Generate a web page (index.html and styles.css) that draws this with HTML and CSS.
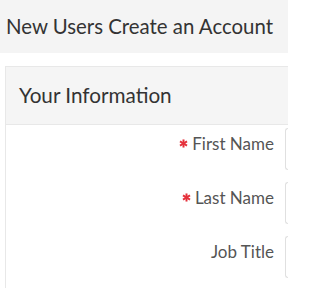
FILE: index.html
```html
<!DOCTYPE html>
<html>
<head>
<meta charset="utf-8">
<link rel="stylesheet" href="styles.css">
</head>
<body>
<div class="page-head">New Users Create an Account</div>
<div class="wrap">
  <div class="card">
    <div class="card-head">Your Information</div>
    <div class="card-body">
      <div class="row">
        <label class="lbl"><svg class="req" viewBox="0 0 10 10" width="9" height="9"><g stroke="#e5323c" stroke-width="2.2" stroke-linecap="butt"><line x1="5" y1="0.5" x2="5" y2="9.5"/><line x1="1.1" y1="2.75" x2="8.9" y2="7.25"/><line x1="1.1" y1="7.25" x2="8.9" y2="2.75"/></g></svg>First Name</label>
        <div class="input"></div>
      </div>
      <div class="row">
        <label class="lbl"><svg class="req" viewBox="0 0 10 10" width="9" height="9"><g stroke="#e5323c" stroke-width="2.2" stroke-linecap="butt"><line x1="5" y1="0.5" x2="5" y2="9.5"/><line x1="1.1" y1="2.75" x2="8.9" y2="7.25"/><line x1="1.1" y1="7.25" x2="8.9" y2="2.75"/></g></svg>Last Name</label>
        <div class="input"></div>
      </div>
      <div class="row">
        <label class="lbl">Job Title</label>
        <div class="input"></div>
      </div>
    </div>
  </div>
</div>
</body>
</html>
```
FILE: styles.css
```css
html, body {
  margin: 0;
  padding: 0;
  background: #ffffff;
  font-family: Lato, "Open Sans", sans-serif;
  overflow: hidden;
  width: 288px;
  height: 288px;
}
.page-head {
  height: 53px;
  background: #f4f4f4;
  color: #333333;
  font-size: 20.4px;
  line-height: 53px;
  padding-left: 6px;
  white-space: nowrap;
  overflow: hidden;
}
.wrap {
  padding: 13px 0 0 5px;
}
.card {
  border: 1px solid #e8e8e8;
  border-right: none;
  border-bottom: none;
  background: #ffffff;
  overflow: hidden;
}
.card-head {
  height: 57px;
  line-height: 57px;
  background: #f5f5f5;
  border-bottom: 1px solid #e8e8e8;
  padding-left: 13px;
  font-size: 20.7px;
  color: #333333;
  white-space: nowrap;
}
.card-body {
  padding-top: 3px;
  padding-bottom: 10px;
  display: flex;
  flex-direction: column;
  gap: 12px;
}
.row {
  display: grid;
  grid-template-columns: 268px 1fr;
  column-gap: 11px;
  align-items: start;
}
.lbl {
  text-align: right;
  font-size: 17px;
  color: #555555;
  line-height: 20px;
  padding-top: 6px;
  white-space: nowrap;
}
.req {
  display: inline-block;
  vertical-align: 2px;
  margin-right: 4px;
}
.input {
  height: 40px;
  border: 1px solid #e0e0e0;
  border-right: none;
  border-radius: 3px 0 0 3px;
}
```
